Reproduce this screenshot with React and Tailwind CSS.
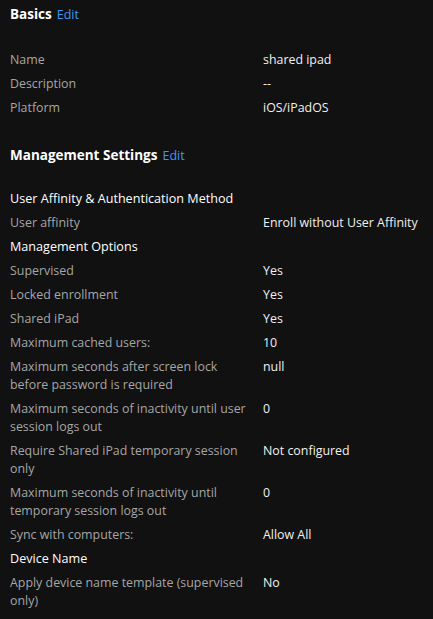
import React from "react";

const font = { fontFamily: '"Segoe UI", "Open Sans", sans-serif' };

function Header({ title }) {
  return (
    <div className="flex items-baseline gap-[5px] text-[13.5px] leading-5">
      <span className="font-bold text-white">{title}</span>
      <span className="text-[#4096f5] text-[12.5px]">Edit</span>
    </div>
  );
}

function Row({ label, value }) {
  return (
    <div className="flex text-[12.4px] leading-[18px]">
      <div className="w-[241px] mr-[12px] text-[#a6a6a6] shrink-0">{label}</div>
      <div className="text-[#f0f0f0]">{value}</div>
    </div>
  );
}

function Sub({ children }) {
  return <div className="text-[12.6px] leading-[18px] font-medium text-white">{children}</div>;
}

export default function App() {
  return (
    <div className="w-[433px] h-[619px] bg-[#111111] pl-[10px] pt-[4px] overflow-hidden" style={font}>
      <Header title="Basics" />
      <div className="mt-[26px] flex flex-col gap-[6px]">
        <Row label="Name" value="shared ipad" />
        <Row label="Description" value="--" />
        <Row label="Platform" value="iOS/iPadOS" />
      </div>
      <div className="mt-[28px]">
        <Header title="Management Settings" />
      </div>
      <div className="mt-[24px] flex flex-col gap-[6px]">
        <Sub>User Affinity &amp; Authentication Method</Sub>
        <Row label="User affinity" value="Enroll without User Affinity" />
        <Sub>Management Options</Sub>
        <Row label="Supervised" value="Yes" />
        <Row label="Locked enrollment" value="Yes" />
        <Row label="Shared iPad" value="Yes" />
        <Row label="Maximum cached users:" value="10" />
        <Row label="Maximum seconds after screen lock before password is required" value="null" />
        <Row label="Maximum seconds of inactivity until user session logs out" value="0" />
        <Row label="Require Shared iPad temporary session only" value="Not configured" />
        <Row label="Maximum seconds of inactivity until temporary session logs out" value="0" />
        <Row label="Sync with computers:" value="Allow All" />
        <Sub>Device Name</Sub>
        <Row label="Apply device name template (supervised only)" value="No" />
      </div>
    </div>
  );
}
